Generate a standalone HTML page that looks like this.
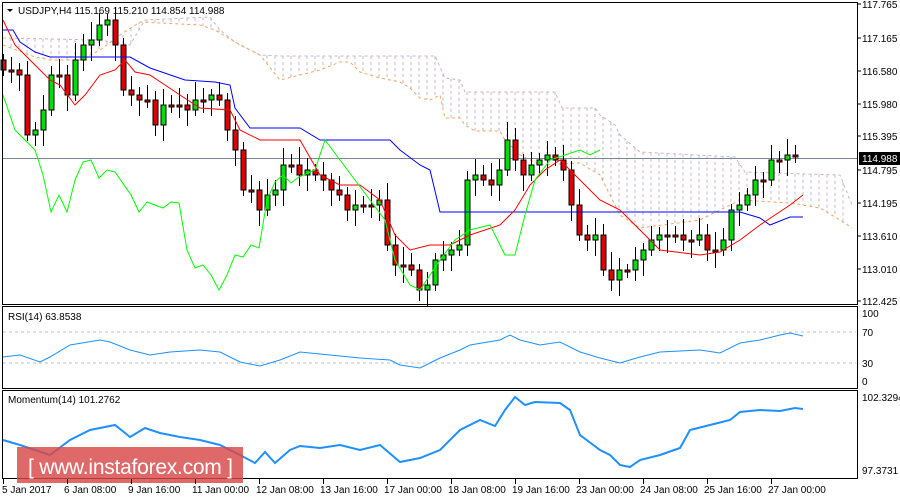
<!DOCTYPE html>
<html><head><meta charset="utf-8"><style>
body{margin:0;background:#fff;width:900px;height:500px;overflow:hidden;font-family:"Liberation Sans",sans-serif}
svg{display:block}
text{font-family:"Liberation Sans",sans-serif;font-size:10px;fill:#000}
</style></head><body>
<svg id="s" width="900" height="500" xmlns="http://www.w3.org/2000/svg"></svg>
<script>
(function(){
var s=document.getElementById('s'),h='';
function pl(pts,c,w,d){return '<polyline fill="none" stroke="'+c+'" stroke-width="'+w+'"'+(d?' stroke-dasharray="'+d+'"':'')+' points="'+pts.map(function(p){return p.join(',')}).join(' ')+'"/>';}
function interp(pts,x){for(var i=0;i<pts.length-1;i++){if(x>=pts[i][0]&&x<=pts[i+1][0]){var t=(x-pts[i][0])/(pts[i+1][0]-pts[i][0]);return pts[i][1]+t*(pts[i+1][1]-pts[i][1]);}}return null;}
var lil=[[3,38],[100,40],[130,45],[145,20],[210,17],[220,30],[235,42],[260,55],[280,56],[435,56],[445,78],[460,80],[465,92],[555,92],[562,108],[595,108],[600,115],[615,125],[620,135],[640,152],[735,157],[745,172],[840,175],[852,205]];
var ora=[[3,45],[35,57],[50,60],[80,60],[100,50],[120,35],[140,22],[200,25],[215,30],[240,45],[260,55],[280,80],[300,75],[320,70],[340,62],[350,62],[360,72],[380,78],[400,82],[410,88],[420,98],[430,100],[440,95],[445,118],[460,118],[465,125],[475,131],[500,131],[505,140],[520,155],[540,165],[580,163],[600,175],[620,215],[640,228],[700,220],[740,200],[790,203],[820,208],[840,220],[852,228]];
for(var xx=11;xx<850;xx+=8){var a=interp(lil,xx),b=interp(ora,xx);if(a!==null&&b!==null&&Math.abs(a-b)>2)h+='<line x1="'+xx+'" y1="'+a+'" x2="'+xx+'" y2="'+b+'" stroke="#c8b4c8" stroke-dasharray="3,3"/>';}
h+=pl(lil,'#c8b4c8',1,'3,3')+pl(ora,'#f4a460',1,'3,3');
h+='<line x1="2" y1="158.5" x2="857" y2="158.5" stroke="#778899"/>';
var c=[70,70,75,135,130,110,75,75,95,60,45,40,25,20,45,90,95,100,100,125,105,105,105,110,100,100,95,100,130,150,190,190,210,195,190,165,165,175,170,175,180,190,195,210,205,205,205,200,245,265,265,270,290,285,260,255,250,245,180,175,180,185,170,140,160,175,165,160,155,160,170,205,235,240,235,270,280,270,270,260,250,240,235,235,235,240,240,235,250,250,240,210,205,195,180,180,160,160,155,155];
var prev=60;
for(var i=0;i<c.length;i++){var cx=3+8*i,o=prev,cl=c[i];var bt=Math.min(o,cl),bb=Math.max(o,cl);if(bb-bt<2)bb=bt+2;var hi=bt-6-((i*7)%13),lo=bb+6+((i*5)%15);
h+='<line x1="'+(cx+.5)+'" y1="'+hi+'" x2="'+(cx+.5)+'" y2="'+lo+'" stroke="#000"/>';
h+='<rect x="'+(cx-2)+'" y="'+bt+'" width="5" height="'+(bb-bt)+'" fill="'+(cl<o?'#00e000':'#e00000')+'" stroke="#000"/>';prev=cl;}
h+=pl([[3,30],[13,30],[20,42],[35,52],[50,57],[130,57],[150,68],[185,80],[215,82],[230,85],[235,108],[250,128],[300,128],[320,140],[390,140],[400,150],[420,165],[430,170],[440,212],[740,212],[760,218],[770,225],[790,217],[803,217]],'#0000ff',1);
h+=pl([[3,20],[15,45],[30,60],[50,80],[60,85],[75,105],[85,95],[100,75],[115,70],[125,60],[135,72],[150,75],[180,95],[200,108],[230,110],[240,130],[260,140],[300,140],[320,175],[340,185],[360,185],[380,200],[395,235],[410,250],[430,245],[450,245],[470,235],[500,225],[515,210],[530,185],[545,170],[560,160],[575,175],[600,200],[620,210],[640,230],[660,250],[700,255],[720,252],[740,240],[760,225],[790,205],[803,195]],'#ff0000',1);
h+=pl([[3,95],[15,130],[25,140],[35,150],[43,175],[51,212],[59,195],[67,212],[75,180],[83,162],[91,160],[99,178],[107,170],[115,172],[131,195],[139,212],[147,202],[163,208],[171,202],[179,203],[187,250],[195,268],[203,265],[211,275],[219,290],[227,275],[235,255],[243,257],[251,245],[259,248],[267,200],[275,182],[283,175],[291,183],[299,177],[315,170],[325,140],[340,160],[355,180],[370,200],[385,220],[395,260],[410,285],[420,290],[440,260],[455,240],[470,230],[490,225],[505,255],[515,255],[525,215],[535,180],[550,160],[565,155],[580,150],[590,155],[600,150]],'#00ff00',1);
h+='<line x1="3" y1="332" x2="856" y2="332" stroke="#c0c0c0" stroke-dasharray="3,3"/><line x1="3" y1="363" x2="856" y2="363" stroke="#c0c0c0" stroke-dasharray="3,3"/>';
h+=pl([[3,357],[20,355],[40,362],[50,357],[70,345],[100,340],[110,342],[130,350],[150,355],[170,352],[200,350],[220,352],[240,362],[260,366],[280,360],[300,352],[330,355],[360,358],[390,360],[400,365],[420,368],[440,358],[460,350],[470,345],[500,340],[510,335],[520,340],[540,345],[560,342],[580,352],[600,358],[620,363],[640,357],[660,352],[700,350],[720,353],[740,343],[760,340],[780,335],[790,333],[803,336]],'#1e90ff',1);
h+=pl([[3,440],[20,445],[35,450],[50,455],[70,440],[90,430],[115,425],[130,437],[145,428],[160,433],[180,437],[200,440],[220,445],[240,455],[255,463],[265,452],[275,463],[290,450],[300,446],[320,448],[340,445],[360,450],[380,445],[400,462],[420,458],[440,450],[460,430],[480,420],[495,426],[505,410],[515,397],[525,405],[535,402],[560,403],[570,410],[580,435],[600,450],[610,455],[620,465],[630,467],[640,460],[660,455],[680,448],[690,430],[710,425],[730,420],[740,412],[760,410],[780,411],[795,408],[803,409]],'#1e90ff',2);
h+='<rect x="2.5" y="2.5" width="855" height="302" fill="none" stroke="#000"/><rect x="2.5" y="306.5" width="855" height="82" fill="none" stroke="#000"/><rect x="2.5" y="390.5" width="855" height="88" fill="none" stroke="#000"/>';
h+='<rect x="17" y="447" width="226" height="36" fill="#d84848" opacity="0.82"/><text x="28" y="474" textLength="205" style="font-size:21px;fill:#fff">[ www.instaforex.com ]</text>';
var ax=[[117.765,4],[117.165,38],[116.580,71],[115.980,104],[115.395,136],[114.795,170],[114.195,203],[113.610,236],[113.010,269],[112.425,301]];
ax.forEach(function(a){h+='<line x1="857" y1="'+a[1]+'" x2="861" y2="'+a[1]+'" stroke="#000"/><text x="862" y="'+(a[1]+4)+'">'+a[0].toFixed(3)+'</text>';});
h+='<rect x="859" y="152" width="41" height="13" fill="#000"/><text x="862" y="162" style="fill:#fff">114.988</text>';
[[100,313],[70,332],[30,363],[0,381]].forEach(function(a){h+='<text x="862" y="'+(a[1]+4)+'">'+a[0]+'</text>';});
h+='<text x="862" y="401">102.3294</text><text x="862" y="474">97.3731</text>';
var d=['5 Jan 2017','6 Jan 08:00','9 Jan 16:00','11 Jan 00:00','12 Jan 08:00','13 Jan 16:00','17 Jan 00:00','18 Jan 08:00','19 Jan 16:00','23 Jan 00:00','24 Jan 08:00','25 Jan 16:00','27 Jan 00:00'];
d.forEach(function(t,i){var dx=3+64*i;h+='<line x1="'+(dx+.5)+'" y1="479" x2="'+(dx+.5)+'" y2="484" stroke="#000"/><text x="'+(i?dx-3:2)+'" y="493">'+t+'</text>';});
h+='<path d="M7 9 L13 9 L10 12 Z" fill="#000"/><text x="18" y="14">USDJPY,H4  115.169 115.210 114.854 114.988</text>';
h+='<text x="8" y="320">RSI(14) 63.8538</text><text x="8" y="403">Momentum(14) 101.2762</text>';
s.innerHTML=h;
})();
</script>
</body></html>
